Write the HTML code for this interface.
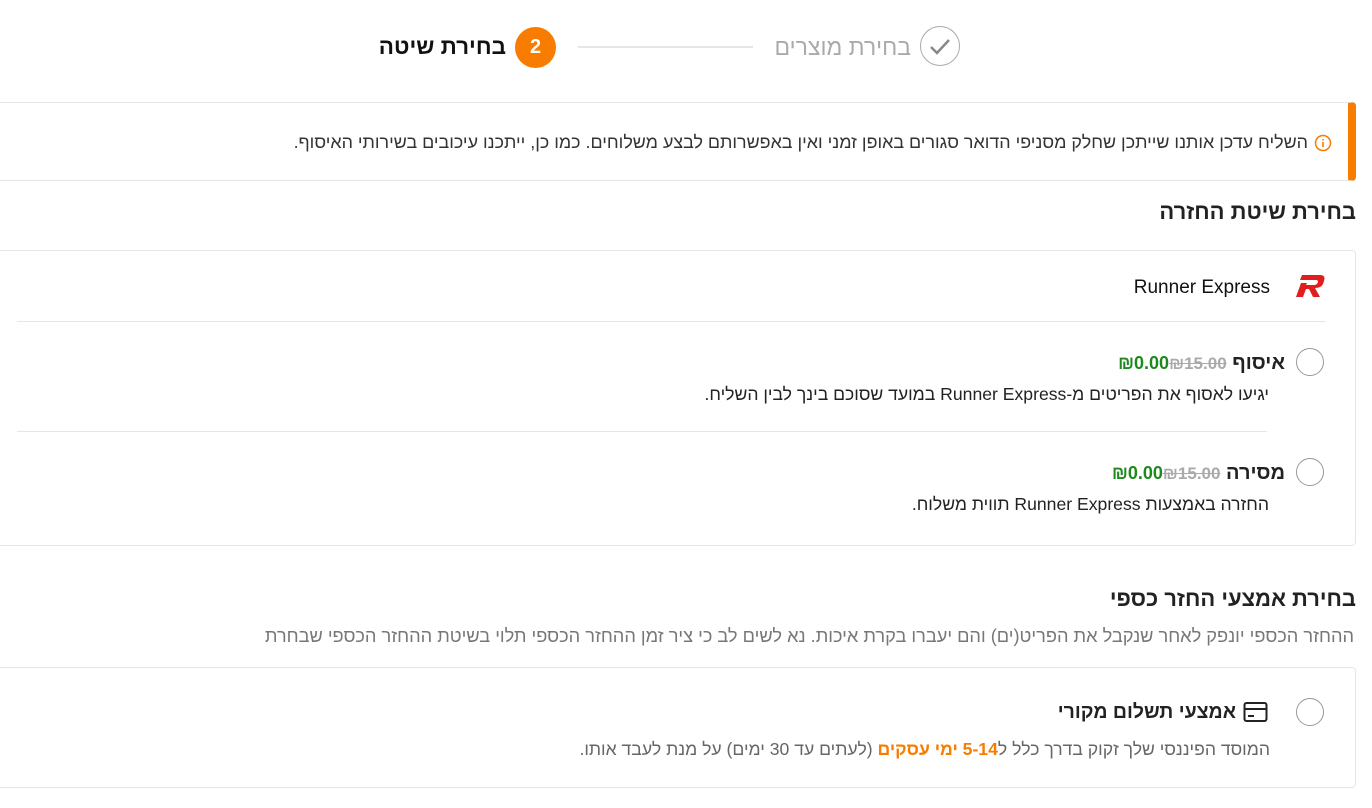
<!DOCTYPE html>
<html><head><meta charset="utf-8"><style>
body{margin:0;width:1372px;height:808px;overflow:hidden;background:#fff;font-family:"Liberation Sans","Noto Sans CJK SC",sans-serif;color:#222;position:relative}
.a{position:absolute;white-space:nowrap}
.r{direction:rtl;text-align:right}
.radio{position:absolute;width:28px;height:28px;border:1.5px solid #999;border-radius:50%;box-sizing:border-box}
.strike{color:#aaa;text-decoration:line-through;font-weight:bold;display:inline-block;direction:ltr}
.green{color:#1e8a1e;font-weight:bold;display:inline-block;direction:ltr}
</style></head><body>
<!-- stepper -->
<div class="a" style="left:920px;top:26px;width:40px;height:40px;border:1.5px solid #aaa;border-radius:50%;box-sizing:border-box"></div>
<svg class="a" style="left:920px;top:26px" width="40" height="40"><path d="M11 21 L17 27 L29 14" fill="none" stroke="#888" stroke-width="2.5"/></svg>
<div class="a r" style="right:461px;top:34px;font-size:23px;color:#aaa">בחירת מוצרים</div>
<div class="a" style="left:578px;top:46px;width:175px;height:2px;background:#e6e6e6"></div>
<div class="a" style="left:515px;top:27px;width:41px;height:41px;border-radius:50%;background:#f77c00;color:#fff;font-weight:bold;font-size:20px;text-align:center;line-height:41px">2</div>
<div class="a r" style="right:866px;top:34px;font-size:22.5px;font-weight:bold;color:#111">בחירת שיטה</div>
<!-- notice -->
<div class="a" style="left:-10px;top:102px;width:1366px;height:79px;border:1px solid #e6e6e6;box-sizing:border-box;border-right:8px solid #f77c00;border-radius:0 4px 4px 0"></div>
<svg class="a" style="left:1314px;top:134px" width="18" height="18"><circle cx="9" cy="9" r="7.5" fill="none" stroke="#f77c00" stroke-width="1.5"/><path d="M9 8v5M9 5v1.5" stroke="#f77c00" stroke-width="1.6"/></svg>
<div class="a r" style="right:64px;top:132px;font-size:17.9px;color:#333">השליח עדכן אותנו שייתכן שחלק מסניפי הדואר סגורים באופן זמני ואין באפשרותם לבצע משלוחים. כמו כן, ייתכנו עיכובים בשירותי האיסוף.</div>
<div class="a r" style="right:16px;top:199px;font-size:22px;font-weight:bold;color:#222">בחירת שיטת החזרה</div>
<!-- card 1 -->
<div class="a" style="left:-10px;top:250px;width:1366px;height:296px;border:1px solid #e6e6e6;box-sizing:border-box;border-radius:4px"></div>
<svg class="a" style="left:1294px;top:273px" width="32" height="26"><path d="M8 2 H26 Q32 2 30 8 L29 11 Q27 15 21 15 L26 24 H19 L15 16 H12 L9 24 H2 L7 10 H13 L12 12 H20 Q23 12 24 9 Q24 7 22 7 H6 Z" fill="#e01e1e"/></svg>
<div class="a" style="right:102px;top:277px;font-size:19px;color:#111;font-weight:500">Runner Express</div>
<div class="a" style="left:17px;top:321px;width:1309px;height:1px;background:#e6e6e6"></div>
<div class="radio" style="left:1296px;top:348px"></div>
<div class="a r" style="right:87px;top:352px;font-size:20px;font-weight:bold">איסוף <span class="strike" style="font-size:17px">₪15.00</span><span class="green" style="font-size:18px">₪0.00</span></div>
<div class="a r" style="right:103px;top:384px;font-size:17.6px">יגיעו לאסוף את הפריטים מ-Runner Express במועד שסוכם בינך לבין השליח.</div>
<div class="a" style="left:17px;top:431px;width:1250px;height:1px;background:#e6e6e6"></div>
<div class="radio" style="left:1296px;top:458px"></div>
<div class="a r" style="right:87px;top:462px;font-size:20px;font-weight:bold">מסירה <span class="strike" style="font-size:17px">₪15.00</span><span class="green" style="font-size:18px">₪0.00</span></div>
<div class="a r" style="right:103px;top:494px;font-size:17.6px">החזרה באמצעות Runner Express תווית משלוח.</div>
<div class="a r" style="right:16px;top:586px;font-size:22px;font-weight:bold;color:#222">בחירת אמצעי החזר כספי</div>
<div class="a r" style="right:18px;top:626px;font-size:18.2px;color:#777">ההחזר הכספי יונפק לאחר שנקבל את הפריט(ים) והם יעברו בקרת איכות. נא לשים לב כי ציר זמן ההחזר הכספי תלוי בשיטת ההחזר הכספי שבחרת</div>
<!-- card 2 -->
<div class="a" style="left:-10px;top:667px;width:1366px;height:121px;border:1px solid #e6e6e6;box-sizing:border-box;border-radius:4px"></div>
<div class="radio" style="left:1296px;top:698px"></div>
<svg class="a" style="left:1243px;top:701px" width="26" height="22"><rect x="1.5" y="2" width="22" height="18" rx="2" fill="none" stroke="#222" stroke-width="2"/><path d="M1.5 8h22M5 15h6" stroke="#222" stroke-width="2"/></svg>
<div class="a r" style="right:136px;top:701px;font-size:19.5px;font-weight:bold">אמצעי תשלום מקורי</div>
<div class="a r" style="right:102px;top:739px;font-size:17.6px;color:#666">המוסד הפיננסי שלך זקוק בדרך כלל ל<b style="color:#f77c00">5-14 ימי עסקים</b> (לעתים עד 30 ימים) על מנת לעבד אותו.</div>
</body></html>
